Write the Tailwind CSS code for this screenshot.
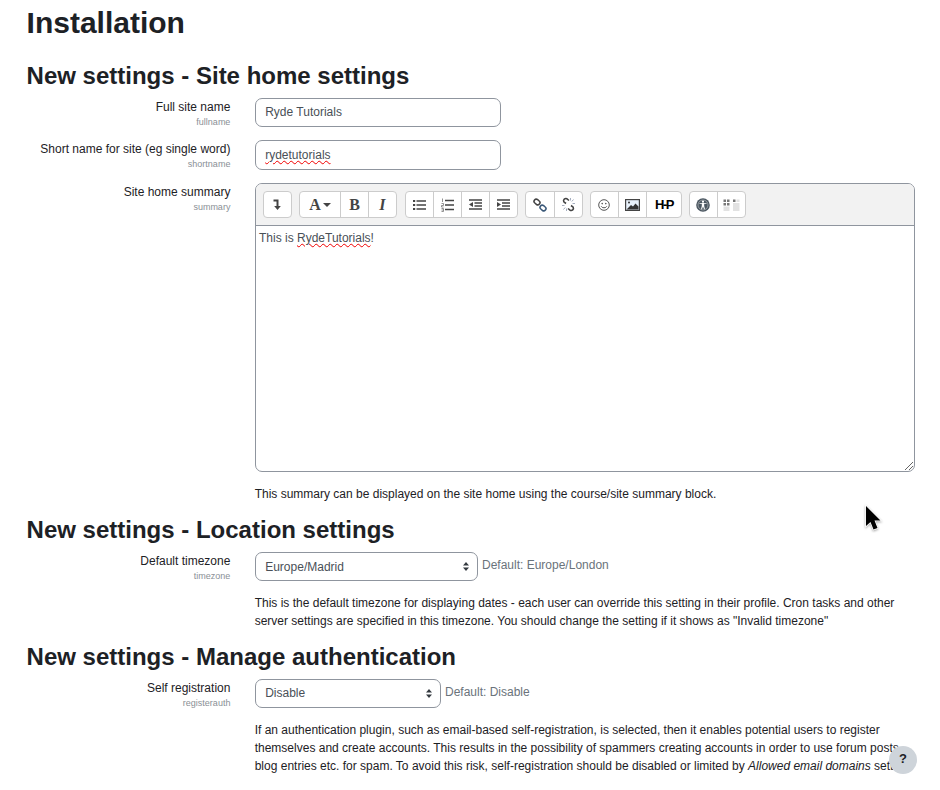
<!DOCTYPE html>
<html lang="en"><head><meta charset="utf-8"><title>Installation</title>
<script src="https://cdn.jsdelivr.net/npm/@tailwindcss/browser@4"></script></head>
<body class="bg-white">
<div class="relative w-[940px] h-[790px] overflow-hidden pl-[26.6px] pr-[25px] font-['Liberation_Sans',sans-serif] text-[12px] leading-[18px] text-[#1d2125]">
<h1 class="mt-[5px] text-[30px] leading-[36px] font-bold">Installation</h1>
<h2 class="mt-[21px] mb-[8px] text-[24px] leading-[28px] font-bold">New settings - Site home settings</h2>

<div class="flex gap-[24.3px] mb-[12px]">
  <div class="w-[203.8px] shrink-0 text-right"><div class="leading-[17px] pt-[1px]">Full site name</div><div class="text-[9px] leading-[12px] text-[#8a9096]">fullname</div></div>
  <div class="w-[246.3px] h-[29px] border border-[#8f959e] rounded-[7px] pl-[9.5px] pb-[1px] flex items-center text-[#495057]">Ryde Tutorials</div>
</div>
<div class="flex gap-[24.3px] mb-[13px]">
  <div class="w-[203.8px] shrink-0 text-right"><div class="leading-[17px] pt-[1px]">Short name for site (eg single word)</div><div class="text-[9px] leading-[12px] text-[#8a9096]">shortname</div></div>
  <div class="w-[246.3px] h-[30px] border border-[#8f959e] rounded-[7px] pl-[9.5px] flex items-center text-[#495057]"><span class="underline decoration-wavy decoration-[#f00000] decoration-1">rydetutorials</span></div>
</div>
<div class="flex gap-[24.3px]">
  <div class="w-[203.8px] shrink-0 text-right"><div class="leading-[17px] pt-[1px]">Site home summary</div><div class="text-[9px] leading-[13px] text-[#8a9096]">summary</div></div>
  <div class="w-[660.300px]">
    <div class="relative h-[289px] border border-[#8f959e] rounded-[7px] overflow-hidden flex flex-col">
      <div class="h-[42px] bg-[#f2f2f2] border-b border-[#8f959e] flex items-start pt-[7px] pl-[7.300px] gap-[7px] shrink-0">
        <div class="flex h-[27px] bg-white border border-[#ccc] rounded-[4px]">
          <div class="w-[27px] flex items-center justify-center"><svg width="10" height="13" viewBox="0 0 10 13"><path d="M1.500 2.500H5.500V9" fill="none" stroke="#444" stroke-width="2"/><path d="M2.200 8H8.800L5.500 12Z" fill="#444"/></svg></div>
        </div>
        <div class="flex h-[27px] bg-white border border-[#ccc] rounded-[4px] text-[#444] font-['Liberation_Serif',serif] font-bold text-[16px]">
          <div class="w-[41px] flex items-center justify-center gap-[2px] border-r border-[#ccc]"><span>A</span><svg width="8" height="4" viewBox="0 0 8 4"><path d="M0 0H8L4 4Z" fill="#444"/></svg></div>
          <div class="w-[28px] flex items-center justify-center border-r border-[#ccc]">B</div>
          <div class="w-[27px] flex items-center justify-center italic">I</div>
        </div>
        <div class="flex h-[27px] ml-[1px] bg-white border border-[#ccc] rounded-[4px]">
          <div class="w-[28px] flex items-center justify-center border-r border-[#ccc]"><svg width="13" height="10" viewBox="0 0 13 10"><path d="M3.500 1H13M3.500 5H13M3.500 9H13" stroke="#444" stroke-width="1.700"/><path d="M0 0H2.200V2H0ZM0 4H2.200V6H0ZM0 8H2.200V10H0Z" fill="#444"/></svg></div>
          <div class="w-[28px] flex items-center justify-center border-r border-[#ccc]"><svg width="13" height="14" viewBox="0 0 13 14"><path d="M4 2.500H13M4 7H13M4 11.500H13" stroke="#444" stroke-width="1.500"/><path d="M1.500 .5V4M.5 5.500H2.500V7.500H.5V9H2.500M.5 10.500H2.500V13.500H.5M.5 12H2.500" fill="none" stroke="#777" stroke-width=".8"/></svg></div>
          <div class="w-[28px] flex items-center justify-center border-r border-[#ccc]"><svg width="13" height="11" viewBox="0 0 13 11"><path d="M0 1H13M5.500 4H13M5.500 7H13M0 10H13" stroke="#444" stroke-width="1.500"/><path d="M4 3V8L0 5.500Z" fill="#444"/></svg></div>
          <div class="w-[27px] flex items-center justify-center"><svg width="13" height="11" viewBox="0 0 13 11"><path d="M0 1H13M5 4H13M5 7H13M0 10H13" stroke="#444" stroke-width="1.500"/><path d="M0 3V8L4 5.500Z" fill="#444"/></svg></div>
        </div>
        <div class="flex h-[27px] bg-white border border-[#ccc] rounded-[4px]">
          <div class="w-[29px] flex items-center justify-center border-r border-[#ccc]"><svg width="14" height="14" viewBox="0 0 14 14" fill="none"><rect x="-3.200" y="-2.200" width="6.400" height="4.400" rx="2.200" transform="translate(4 4) rotate(40)" stroke="#444" stroke-width="1.500"/><rect x="-3.200" y="-2.200" width="6.400" height="4.400" rx="2.200" transform="translate(10 10) rotate(40)" stroke="#3a5878" stroke-width="1.500"/></svg></div>
          <div class="w-[27px] flex items-center justify-center"><svg width="15" height="15" viewBox="0 0 15 15" fill="none" stroke="#444" stroke-width="1.600"><path d="M8 3.500L6 1.800C4 .8 1.800 2.500 2.800 4.800L5 6.500"/><path d="M7 11.500L9 13.200C11 14.200 13.200 12.500 12.200 10.200L10 8.500"/><path d="M9.500 1V3.500M12.500 2.500L10.800 4.500M14 6.500H11.500M1 8.500H3.500M2.500 12.500L4.200 10.500M5.500 14V11.500" stroke="#9aa4b8" stroke-width=".9"/></svg></div>
        </div>
        <div class="flex h-[27px] bg-white border border-[#ccc] rounded-[4px]">
          <div class="w-[28px] flex items-center justify-center border-r border-[#ccc]"><svg width="12" height="12" viewBox="0 0 12 12" fill="none"><circle cx="6" cy="6" r="5.300" stroke="#555" stroke-width="1"/><circle cx="4.200" cy="4.600" r=".8" fill="#555"/><circle cx="7.800" cy="4.600" r=".8" fill="#555"/><path d="M3.200 7.300C4 9.300 8 9.300 8.800 7.300" stroke="#555"/></svg></div>
          <div class="w-[28px] flex items-center justify-center border-r border-[#ccc]"><svg width="15" height="12" viewBox="0 0 15 12"><rect x=".6" y=".6" width="13.800" height="10.800" fill="#e8f1fb" stroke="#444" stroke-width="1.200"/><path d="M1.500 10.500L6 6L8 7.500L10.500 4.500L13.500 7.500V10.500Z" fill="#333"/><circle cx="4" cy="3.500" r="1" fill="#333"/></svg></div>
          <div class="w-[34px] flex items-center justify-center font-bold text-[13px] leading-none text-black tracking-[-1.5px]">H-P</div>
        </div>
        <div class="flex h-[27px] bg-white border border-[#ccc] rounded-[4px]">
          <div class="w-[28px] flex items-center justify-center border-r border-[#ccc]"><svg width="14" height="14" viewBox="0 0 14 14"><circle cx="7" cy="7" r="6.800" fill="#4a5660"/><circle cx="7" cy="7" r="5" fill="none" stroke="#ddd" stroke-width=".5"/><circle cx="7" cy="3.700" r="1.100" fill="#fff"/><path d="M3.500 5H10.500V5.800H8.200V8L9 11.200H8L7 8.500L6 11.200H5L5.800 8V5.800H3.500Z" fill="#fff"/></svg></div>
          <div class="w-[27px] flex items-center justify-center"><svg width="17" height="12" viewBox="0 0 17 12"><path d="M.5 .5H3V3H.5ZM4 .5H6.500V3H4ZM.5 4H3V6.500H.5ZM4 4H6.500V6.500H4Z" fill="#777"/><path d="M10 .5H12.500V3H10Z" fill="#777"/><path d="M13.500 .5H16.500V3H13.500ZM10 4H16.500V12H10ZM.5 7.500H6.500V12H.5Z" fill="#e2e2e2"/></svg></div>
        </div>
      </div>
      <div class="flex-1 pl-[3.300px] py-[3px] text-[#495057]">This is <span class="underline decoration-wavy decoration-[#f00000] decoration-1">RydeTutorials</span>!</div>
      <svg class="absolute right-[1px] bottom-[1px]" width="8" height="8" viewBox="0 0 8 8"><path d="M0 8L8 0M4 8L8 4" stroke="#666" stroke-width="1"/></svg>
    </div>
    <p class="mt-[13px]">This summary can be displayed on the site home using the course/site summary block.</p>
  </div>
</div>

<h2 class="mt-[13px] mb-[8px] text-[24px] leading-[28px] font-bold">New settings - Location settings</h2>
<div class="flex gap-[24.3px]">
  <div class="w-[203.8px] shrink-0 text-right"><div class="leading-[17px] pt-[1px]">Default timezone</div><div class="text-[9px] leading-[13px] text-[#8a9096]">timezone</div></div>
  <div class="w-[660.300px]">
    <div class="flex items-start gap-[4px]">
      <div class="w-[223.300px] h-[29px] border border-[#8f959e] rounded-[7px] pl-[9.5px] pr-[8px] flex items-center justify-between text-[#495057]">Europe/Madrid<svg width="6" height="9" viewBox="0 0 6 9"><path d="M3 0L6 3.500H0ZM3 9L0 5.500H6Z" fill="#343a40"/></svg></div>
      <span class="text-[#6a737b] leading-[27px]">Default: Europe/London</span>
    </div>
    <p class="mt-[14px] leading-[17.500px]">This is the default timezone for displaying dates - each user can override this setting in their profile. Cron tasks and other server settings are specified in this timezone. You should change the setting if it shows as "Invalid timezone"</p>
  </div>
</div>

<h2 class="mt-[13px] mb-[8px] text-[24px] leading-[28px] font-bold">New settings - Manage authentication</h2>
<div class="flex gap-[24.3px]">
  <div class="w-[203.8px] shrink-0 text-right"><div class="leading-[17px] pt-[1px]">Self registration</div><div class="text-[9px] leading-[13px] text-[#8a9096]">registerauth</div></div>
  <div class="w-[660.300px]">
    <div class="flex items-start gap-[4px]">
      <div class="w-[186.300px] h-[29px] border border-[#8f959e] rounded-[7px] pl-[9.5px] pr-[8px] pb-[1px] flex items-center justify-between text-[#495057]">Disable<svg width="6" height="9" viewBox="0 0 6 9"><path d="M3 0L6 3.500H0ZM3 9L0 5.500H6Z" fill="#343a40"/></svg></div>
      <span class="text-[#6a737b] leading-[26px]">Default: Disable</span>
    </div>
    <p class="mt-[13px] leading-[18px]">If an authentication plugin, such as email-based self-registration, is selected, then it enables potential users to register themselves and create accounts. This results in the possibility of spammers creating accounts in order to use forum posts, blog entries etc. for spam. To avoid this risk, self-registration should be disabled or limited by <em>Allowed email domains</em> setting.</p>
  </div>
</div>

<div class="absolute left-[889px] top-[746px] w-[28px] h-[28px] rounded-full bg-[#ced4da] flex items-center justify-center pb-[2px] font-bold text-[13px] text-[#1d2125]">?</div>
<svg class="absolute left-[862px] top-[503px]" width="22" height="30" viewBox="0 0 22 30"><path d="M4 3V23L8.500 19L11.500 26.500L15.500 25L12.500 17.500H18.500Z" fill="#000" stroke="#fff" stroke-width="1.500" paint-order="stroke" class="drop-shadow-[0_1px_1px_rgba(0,0,0,0.35)]"/></svg>
</div>
</body></html>
